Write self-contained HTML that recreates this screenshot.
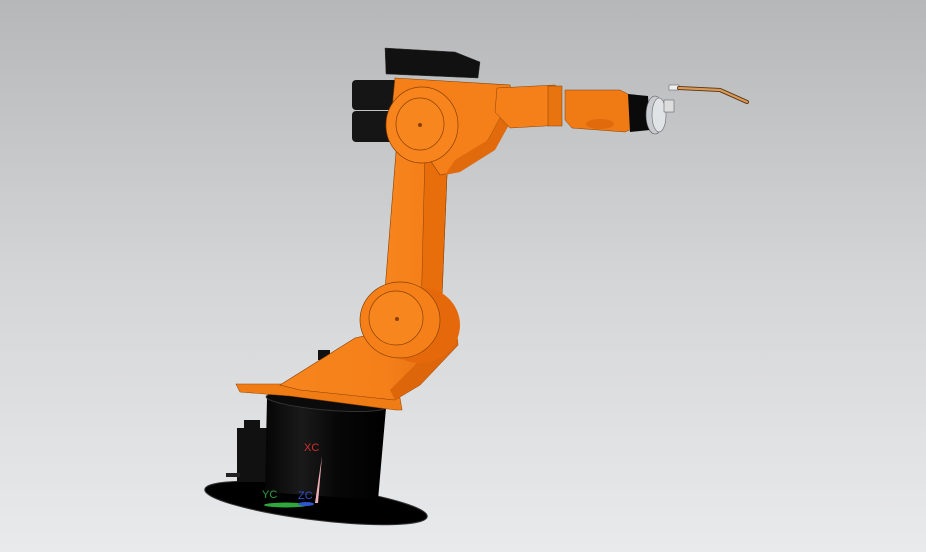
<!DOCTYPE html>
<html><head><meta charset="utf-8"><style>
html,body{margin:0;padding:0;width:926px;height:552px;overflow:hidden}
svg{display:block}
text{font-family:"Liberation Sans",sans-serif;font-size:11px}
</style></head><body>
<svg width="926" height="552" viewBox="0 0 926 552" xmlns="http://www.w3.org/2000/svg">
<defs>
<linearGradient id="bg" x1="0" y1="0" x2="0" y2="1">
<stop offset="0" stop-color="#b6b7b9"/><stop offset="0.5" stop-color="#d4d5d7"/><stop offset="1" stop-color="#e9eaec"/></linearGradient>
<linearGradient id="cyl" x1="0" y1="0" x2="1" y2="0">
<stop offset="0" stop-color="#050505"/><stop offset="0.3" stop-color="#1a1a1a"/><stop offset="0.6" stop-color="#070707"/><stop offset="1" stop-color="#000"/></linearGradient>
<linearGradient id="arm" x1="0" y1="0" x2="1" y2="0">
<stop offset="0" stop-color="#f7841c"/><stop offset="0.6" stop-color="#f5801a"/><stop offset="1" stop-color="#e06a0c"/></linearGradient>
</defs>
<rect width="926" height="552" fill="url(#bg)"/>
<!-- base disc -->
<ellipse cx="316" cy="503" rx="112" ry="17" transform="rotate(7 316 503)" fill="#000" stroke="#333" stroke-width="1"/>
<!-- side box -->
<rect x="237" y="428" width="32" height="54" fill="#111"/>
<rect x="244" y="420" width="16" height="12" fill="#111"/>
<rect x="226" y="473" width="14" height="4" fill="#222"/>
<!-- cylinder -->
<path d="M267 398 L386 408 L378 500 L265 492 Z" fill="url(#cyl)"/>
<ellipse cx="326" cy="402" rx="60" ry="8" transform="rotate(5 326 402)" fill="#0b0b0b" stroke="#333"/>
<!-- pink arrow -->
<path d="M322 456 L318 503 L315 503 Z" fill="#f0b0b8"/>
<ellipse cx="286" cy="505" rx="22" ry="2.5" fill="#2ea83a"/>
<ellipse cx="306" cy="504" rx="8" ry="2" fill="#2f55d0"/>
<text x="304" y="451" fill="#d03030">XC</text>
<text x="262" y="498" fill="#30a040">YC</text>
<text x="298" y="499" fill="#3050d0">ZC</text>
<!-- small black piece behind arm -->
<rect x="318" y="350" width="12" height="10" fill="#111"/>
<!-- flange -->
<path d="M236 384 L300 384 L400 398 L402 410 L396 410 L290 396 L240 392 Z" fill="#f07c16" stroke="#a04a00" stroke-width="0.6"/>
<!-- lower arm to elbow -->
<path d="M280 385 L355 338 L455 315 L458 345 L420 385 L395 400 L300 390 Z" fill="url(#arm)" stroke="#8a4000" stroke-width="0.6"/>
<path d="M455 315 L458 345 L420 385 L395 400 L390 390 L430 350 Z" fill="#dd660a"/>
<!-- upper arm -->
<path d="M385 290 L397 140 L448 150 L441 320 Z" fill="url(#arm)" stroke="#8a4000" stroke-width="0.6"/>
<path d="M425 150 L448 150 L441 320 L421 318 Z" fill="#e86e0c" stroke="#8a4000" stroke-width="0.5"/>
<!-- elbow joint -->
<ellipse cx="420" cy="325" rx="40" ry="38" fill="#e5690b"/>
<ellipse cx="400" cy="320" rx="40" ry="38" fill="#f5801a" stroke="#8a4000" stroke-width="0.7"/>
<ellipse cx="396" cy="318" rx="27" ry="27" fill="#f7861e" stroke="#8a4000" stroke-width="0.7"/>
<circle cx="397" cy="319" r="2" fill="#8a4000"/>
<!-- top black boxes -->
<path d="M385 48 L455 52 L480 62 L478 78 L386 74 Z" fill="#111" stroke="#333" stroke-width="0.5"/>
<rect x="352" y="80" width="45" height="30" rx="4" fill="#151515"/>
<rect x="352" y="111" width="45" height="31" rx="4" fill="#151515"/>
<!-- shoulder housing -->
<path d="M395 78 L510 85 L512 96 L488 140 L455 172 L440 175 L430 160 L390 130 Z" fill="#f5801a" stroke="#8a4000" stroke-width="0.6"/>
<path d="M512 96 L520 105 L495 150 L460 172 L445 175 L455 160 L488 140 Z" fill="#e06a0c"/>
<ellipse cx="422" cy="125" rx="36" ry="38" fill="#f7841c" stroke="#8a4000" stroke-width="0.7"/>
<ellipse cx="420" cy="124" rx="24" ry="26" fill="#f7861e" stroke="#8a4000" stroke-width="0.7"/>
<circle cx="420" cy="125" r="2" fill="#8a4000"/>
<!-- forearm -->
<path d="M497 88 L555 85 L560 90 L562 125 L510 128 L495 112 Z" fill="#f5801a" stroke="#8a4000" stroke-width="0.5"/>
<rect x="548" y="86" width="14" height="40" fill="#e87410" stroke="#8a4000" stroke-width="0.5"/>
<path d="M565 90 L620 90 L632 96 L634 128 L625 132 L572 128 L565 120 Z" fill="#f07a14" stroke="#8a4000" stroke-width="0.5"/>
<ellipse cx="600" cy="124" rx="14" ry="5" fill="#e06a0c"/>
<!-- black ring + flange -->
<path d="M628 94 L648 96 L650 130 L630 132 Z" fill="#0a0a0a"/>
<ellipse cx="655" cy="115" rx="9" ry="19" fill="#c8ccd0" stroke="#555" stroke-width="0.6"/>
<ellipse cx="659" cy="115" rx="7" ry="17" fill="#dfe3e6" stroke="#666" stroke-width="0.6"/>
<rect x="664" y="100" width="10" height="12" fill="#ddd" stroke="#555" stroke-width="0.5"/>
<!-- torch -->
<rect x="669" y="85" width="10" height="5" fill="#eee" stroke="#555" stroke-width="0.5"/>
<path d="M679 88 L720 90 L747 102" fill="none" stroke="#5a3410" stroke-width="4" stroke-linecap="round"/>
<path d="M679 88 L720 90 L747 102" fill="none" stroke="#d79a5a" stroke-width="2.2" stroke-linecap="round"/>
</svg>
</body></html>
